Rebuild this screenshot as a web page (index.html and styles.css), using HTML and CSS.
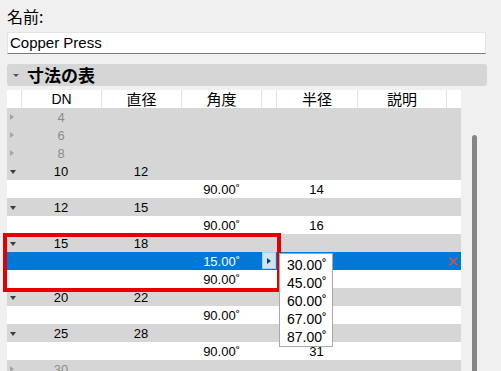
FILE: index.html
```html
<!DOCTYPE html>
<html lang="ja">
  <head>
    <meta charset="UTF-8" />
    <meta name="viewport" content="width=device-width, initial-scale=1.0" />
    <title>Copper Press</title>
    <link rel="stylesheet" href="styles.css">
  </head>
  <body>
    <div class="panel">
      <div class="name-label">名前:</div>
      <div class="name-input">Copper Press</div>

      <div class="section-head">
        <span class="head-caret"></span>
        <span class="section-title">寸法の表</span>
      </div>

      <div class="table-area">
        <div class="table">
          <div class="row head">
            <div class="cell"></div>
            <div class="cell">DN</div>
            <div class="cell jp">直径</div>
            <div class="cell jp">角度</div>
            <div class="cell"></div>
            <div class="cell jp">半径</div>
            <div class="cell jp">説明</div>
            <div class="cell"></div>
          </div>

          <div class="row parent off">
            <div class="cell tog"><span class="closed"></span></div>
            <div class="cell num">4</div>
            <div class="cell"></div><div class="cell"></div><div class="cell"></div>
            <div class="cell"></div><div class="cell"></div><div class="cell"></div>
          </div>
          <div class="row parent off">
            <div class="cell tog"><span class="closed"></span></div>
            <div class="cell num">6</div>
            <div class="cell"></div><div class="cell"></div><div class="cell"></div>
            <div class="cell"></div><div class="cell"></div><div class="cell"></div>
          </div>
          <div class="row parent off">
            <div class="cell tog"><span class="closed"></span></div>
            <div class="cell num">8</div>
            <div class="cell"></div><div class="cell"></div><div class="cell"></div>
            <div class="cell"></div><div class="cell"></div><div class="cell"></div>
          </div>

          <div class="row parent">
            <div class="cell tog"><span class="open"></span></div>
            <div class="cell num">10</div>
            <div class="cell num">12</div>
            <div class="cell"></div><div class="cell"></div>
            <div class="cell"></div><div class="cell"></div><div class="cell"></div>
          </div>
          <div class="row child">
            <div class="cell"></div><div class="cell"></div><div class="cell"></div>
            <div class="cell angle">90.00˚</div>
            <div class="cell"></div>
            <div class="cell num">14</div>
            <div class="cell"></div><div class="cell"></div>
          </div>

          <div class="row parent">
            <div class="cell tog"><span class="open"></span></div>
            <div class="cell num">12</div>
            <div class="cell num">15</div>
            <div class="cell"></div><div class="cell"></div>
            <div class="cell"></div><div class="cell"></div><div class="cell"></div>
          </div>
          <div class="row child">
            <div class="cell"></div><div class="cell"></div><div class="cell"></div>
            <div class="cell angle">90.00˚</div>
            <div class="cell"></div>
            <div class="cell num">16</div>
            <div class="cell"></div><div class="cell"></div>
          </div>

          <div class="row parent">
            <div class="cell tog"><span class="open"></span></div>
            <div class="cell num">15</div>
            <div class="cell num">18</div>
            <div class="cell"></div><div class="cell"></div>
            <div class="cell"></div><div class="cell"></div><div class="cell"></div>
          </div>
          <div class="row child sel">
            <div class="cell"></div><div class="cell"></div><div class="cell"></div>
            <div class="cell angle">15.00˚</div>
            <div class="cell"><span class="pick-btn"><span class="pick-arrow"></span></span></div>
            <div class="cell"></div>
            <div class="cell"></div>
            <div class="cell del">
              <svg width="9" height="9" viewBox="0 0 9 9"><path d="M0.5 0.5 L8.5 8.5 M8.5 0.5 L0.5 8.5" stroke="#e9502f" stroke-width="1.4" fill="none"/></svg>
            </div>
          </div>
          <div class="row child">
            <div class="cell"></div><div class="cell"></div><div class="cell"></div>
            <div class="cell angle">90.00˚</div>
            <div class="cell"></div><div class="cell"></div><div class="cell"></div><div class="cell"></div>
          </div>

          <div class="row parent">
            <div class="cell tog"><span class="open"></span></div>
            <div class="cell num">20</div>
            <div class="cell num">22</div>
            <div class="cell"></div><div class="cell"></div>
            <div class="cell"></div><div class="cell"></div><div class="cell"></div>
          </div>
          <div class="row child">
            <div class="cell"></div><div class="cell"></div><div class="cell"></div>
            <div class="cell angle">90.00˚</div>
            <div class="cell"></div><div class="cell"></div><div class="cell"></div><div class="cell"></div>
          </div>

          <div class="row parent">
            <div class="cell tog"><span class="open"></span></div>
            <div class="cell num">25</div>
            <div class="cell num">28</div>
            <div class="cell"></div><div class="cell"></div>
            <div class="cell"></div><div class="cell"></div><div class="cell"></div>
          </div>
          <div class="row child">
            <div class="cell"></div><div class="cell"></div><div class="cell"></div>
            <div class="cell angle">90.00˚</div>
            <div class="cell"></div>
            <div class="cell num">31</div>
            <div class="cell"></div><div class="cell"></div>
          </div>

          <div class="row parent off">
            <div class="cell tog"><span class="closed"></span></div>
            <div class="cell num">30</div>
            <div class="cell"></div><div class="cell"></div><div class="cell"></div>
            <div class="cell"></div><div class="cell"></div><div class="cell"></div>
          </div>

          <!-- annotation + open value list -->
          <div class="highlight"></div>
          <div class="choices">
            <div class="choice">30.00˚</div>
            <div class="choice">45.00˚</div>
            <div class="choice">60.00˚</div>
            <div class="choice">67.00˚</div>
            <div class="choice">87.00˚</div>
          </div>
        </div>

        <div class="scroll-track"><div class="scroll-thumb"></div></div>
      </div>
    </div>
  </body>
</html>
```

FILE: styles.css
```css
body {
  margin: 0;
  background-color: #f0f0f0;
  font-family: "Liberation Sans", "Noto Sans CJK JP", sans-serif;
  color: #000;
  overflow: hidden;
}
.panel {
  padding: 0 14px 0 7px;
}
.name-label {
  font-family: "Noto Sans CJK JP", sans-serif;
  font-size: 16px;
  line-height: 20px;
  height: 32px;
  padding-top: 6px;
  box-sizing: border-box;
}
.name-input {
  width: 479px;
  height: 22px;
  box-sizing: border-box;
  background-color: white;
  border: 1px solid #e4e4e4;
  border-bottom-color: #7a7a7a;
  padding-left: 2px;
  font-size: 15px;
  line-height: 20px;
}
.section-head {
  margin-top: 10px;
  height: 22px;
  background-color: #d6d6d6;
  border-radius: 3px;
  display: flex;
  align-items: center;
}
.head-caret {
  margin-left: 6px;
  margin-right: 8px;
  border-left: 3px solid transparent;
  border-right: 3px solid transparent;
  border-top: 3px solid #555;
}
.section-title {
  font-family: "Noto Sans CJK JP", sans-serif;
  font-weight: 700;
  font-size: 17px;
  line-height: 22px;
}
.table-area {
  margin-top: 4px;
  display: flex;
}
.table {
  width: 454px;
  position: relative;
}
.row {
  display: grid;
  grid-template-columns: 14px 80px 80px 80px 15px 81px 89px 15px;
  height: 18px;
}
.cell {
  box-sizing: border-box;
  font-size: 13px;
  line-height: 16px;
  padding-top: 2px;
  white-space: nowrap;
}
.head {
  background-color: white;
}
.head .cell {
  text-align: center;
  font-size: 14px;
  line-height: 18px;
  padding-top: 0;
}
.head .cell + .cell {
  border-left: 1px solid #e2e2e2;
}
.head .jp {
  font-family: "Noto Sans CJK JP", sans-serif;
  font-size: 15px;
}
.parent {
  background-color: #d6d6d6;
}
.child {
  background-color: white;
}
.sel {
  background-color: #0078d7;
  color: white;
}
.off {
  color: #8c8c8c;
}
.num {
  text-align: center;
}
.angle {
  text-align: right;
  padding-right: 21px;
}
.tog {
  display: flex;
  align-items: center;
  padding: 0 0 0 3px;
}
.open {
  border-left: 3px solid transparent;
  border-right: 3px solid transparent;
  border-top: 4px solid #3c3c3c;
  margin-top: 1px;
}
.closed {
  border-top: 3px solid transparent;
  border-bottom: 3px solid transparent;
  border-left: 4px solid #a4a4a4;
}
.pick-btn {
  display: flex;
  align-items: center;
  justify-content: center;
  width: 14px;
  height: 17px;
  margin: -2px 0 0 1px;
  box-sizing: border-box;
  background-color: #cce4f7;
  border: 1px solid #a9d1f2;
}
.pick-arrow {
  border-top: 3px solid transparent;
  border-bottom: 3px solid transparent;
  border-left: 4px solid #333;
}
.del {
  display: flex;
  align-items: center;
  justify-content: center;
  padding: 0;
}
.highlight {
  position: absolute;
  left: -4px;
  top: 143px;
  width: 278px;
  height: 59px;
  box-sizing: border-box;
  border: 4px solid #e40000;
}
.choices {
  position: absolute;
  left: 272px;
  top: 163px;
  width: 54px;
  box-sizing: border-box;
  background-color: white;
  border: 1px solid #a8a8a8;
  padding: 2px 0 0 0;
}
.choice {
  height: 18px;
  font-size: 14px;
  line-height: 18px;
  padding-left: 7px;
}
.scroll-track {
  width: 40px;
}
.scroll-thumb {
  margin: 45px 0 0 11px;
  width: 5px;
  height: 240px;
  border-radius: 3px;
  background-color: #858585;
}
```
